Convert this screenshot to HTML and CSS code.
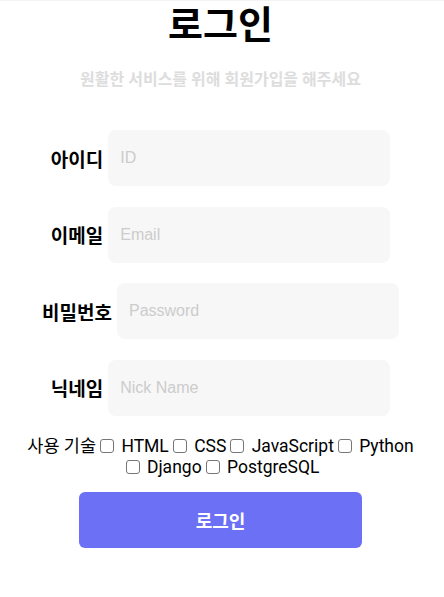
FILE: index.html
```html
<!DOCTYPE html>
<html lang="ko">
<head>
  <meta charset="UTF-8" />
  <meta name="viewport" content="width=device-width, initial-scale=1.0" />
  <title>로그인</title>
  <link rel="stylesheet" href="styles.css">
</head>
<body>
  <div class="page">
    <h1 class="title">로그인</h1>
    <p class="sub">원활한 서비스를 위해 회원가입을 해주세요</p>

    <form class="form" onsubmit="return false">
      <div class="row">
        <label for="uid">아이디</label>
        <input type="text" id="uid" placeholder="ID" />
      </div>
      <div class="row">
        <label for="email">이메일</label>
        <input type="email" id="email" placeholder="Email" />
      </div>
      <div class="row">
        <label for="pw">비밀번호</label>
        <input type="password" id="pw" placeholder="Password" />
      </div>
      <div class="row">
        <label for="nick">닉네임</label>
        <input type="text" id="nick" placeholder="Nick Name" />
      </div>

      <div class="skills">사용 기술<label><input type="checkbox" /> HTML</label><label><input type="checkbox" /> CSS</label><label><input type="checkbox" /> JavaScript</label><label><input type="checkbox" /> Python</label><label><input type="checkbox" /> Django</label><label><input type="checkbox" /> PostgreSQL</label></div>

      <button type="submit" class="btn">로그인</button>
    </form>
  </div>
</body>
</html>
```

FILE: styles.css
```css
body {
  margin: 0;
  font-family: Roboto, "Noto Sans CJK KR", sans-serif;
  color: #000000;
  background-color: #ffffff;
}
.page {
  border-top: 1px solid #f3f3f3;
  padding-right: 3px;
  text-align: center;
}
.title {
  font-size: 38px;
  margin: 0;
  line-height: 48px;
}
.sub {
  color: #dddddd;
  font-size: 16px;
  font-weight: bold;
  margin: 17px 0 40px;
}
.row {
  display: flex;
  justify-content: center;
  align-items: center;
  gap: 5px;
  margin-bottom: 20.5px;
}
.row label {
  font-size: 19px;
  font-weight: bold;
}
.row input {
  width: 282px;
  height: 56px;
  box-sizing: border-box;
  padding: 0 12px;
  border: none;
  border-radius: 8px;
  background-color: #f7f7f7;
  font-family: "Liberation Sans", Arial, sans-serif;
  font-size: 16px;
}
.row input::placeholder { color: #cccccc; }
.skills {
  font-size: 17.5px;
  line-height: 21px;
  padding: 0 10px;
  margin-top: 2px;
}
.skills label { display: inline-block; }
.skills input {
  -webkit-appearance: none;
  appearance: none;
  box-sizing: border-box;
  width: 14px;
  height: 14px;
  margin: 0 3px 0 4px;
  border: 1px solid #767676;
  border-radius: 3px;
  background-color: #ffffff;
  vertical-align: -1px;
}
.btn {
  display: block;
  margin: 14px auto 0;
  width: 283px;
  height: 56px;
  border: none;
  border-radius: 6px;
  background-color: #6c70f5;
  color: #ffffff;
  font-family: Roboto, "Noto Sans CJK KR", sans-serif;
  font-size: 18px;
  font-weight: bold;
  cursor: pointer;
}
```
